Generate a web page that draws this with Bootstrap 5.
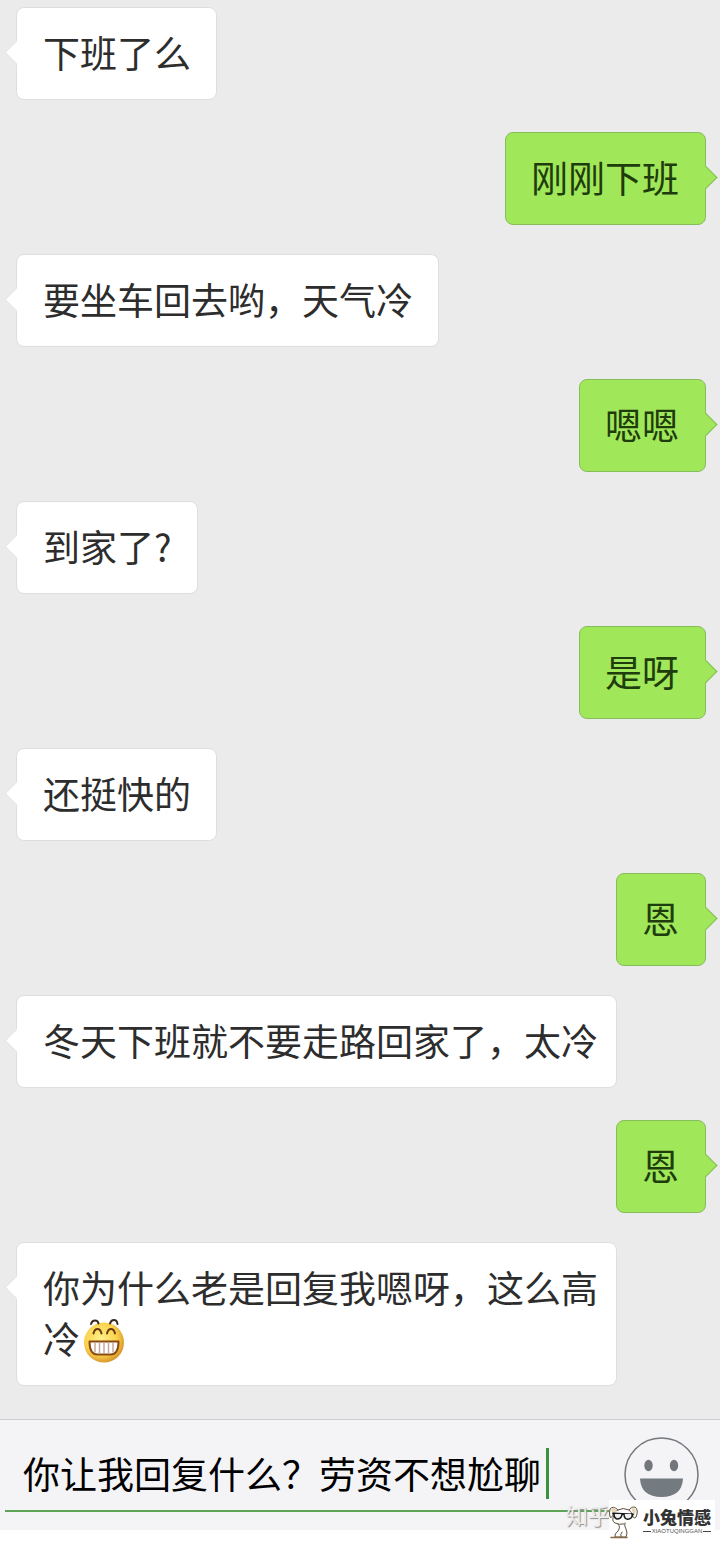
<!DOCTYPE html>
<html lang="zh-CN">
<head>
<meta charset="utf-8">
<meta name="viewport" content="width=device-width, initial-scale=1">
<title>聊天</title>
<link rel="stylesheet" href="https://cdn.jsdelivr.net/npm/bootstrap@5.3.0/dist/css/bootstrap.min.css">
<style>
  body { background: #fff; font-family: "Noto Sans CJK SC", sans-serif; }
  .chat { background: #ebebeb; padding: 7px 14px 33px 16px; }
  .pair { gap: 32px; margin-bottom: 29px; }
  .bubble {
    position: relative; border: 1px solid #dedede; border-radius: 8px;
    background: #fff; color: #2d2d2d; font-size: 37px; line-height: 51px;
    padding: 19px 25px 21px 26px;
  }
  .bubble::before {
    content: ""; position: absolute; top: 36px; left: -9px; width: 17px; height: 17px;
    background: inherit; border: solid #e2e2e2; border-width: 0 0 1px 1px; transform: rotate(45deg);
  }
  .bubble-wide { padding-right: 18px; max-width: 601px; }
  .mine { background: #a0e75a; border-color: #86bd5c; color: #1f3d0c; padding: 19px 26px 21px 25px; }
  .mine::before { left: auto; right: -9px; border-color: #86bd5c; border-width: 1px 1px 0 0; }
  .grin { width: 42px; height: 44px; margin: -6px 0 0 3px; vertical-align: middle; }
  .composer { background: #f4f4f6; border-top: 1px solid #cfcfd1; height: 111px; padding: 17px 21px 0 5px; }
  .field { border-bottom: 2px solid #5fa356; padding: 0 0 11px 18px; height: 75px; margin-right: 14px; }
  .field input {
    width: 14em; height: 52px; font-size: 37px; line-height: 52px; color: #000;
    border: 0; padding: 0; background: none; outline: 0;
  }
  .caret { width: 3px; height: 51px; background: #38913b; margin-left: 5px; }
  .face { width: 75px; height: 75px; border: 0; padding: 0; background: none; }
  .page-end { height: 15px; }
  .source { right: 5px; bottom: -10px; }
  .zhihu { font-size: 22px; line-height: 24px; color: #ededee; text-shadow: 1px 1px 1px #8c8c8c; margin: 2px -1px 0 0; }
  .brand-box { background: #fff; width: 106px; height: 40px; }
  .brand-name { font-size: 17px; line-height: 20px; font-weight: 900; color: #333; margin-top: 7px; }
  .brand-sub { font-family: "Liberation Sans", sans-serif; font-size: 6px; line-height: 8px; color: #555; gap: 1px; }
  .brand-sub::before, .brand-sub::after { content: ""; flex: 1; height: 1px; background: #444; }
</style>
</head>
<body>
<main>
  <section class="chat" aria-label="聊天记录">
    <div class="pair d-flex flex-column">
      <div class="bubble align-self-start">下班了么</div>
      <div class="bubble mine align-self-end">刚刚下班</div>
    </div>
    <div class="pair d-flex flex-column">
      <div class="bubble align-self-start">要坐车回去哟，天气冷</div>
      <div class="bubble mine align-self-end">嗯嗯</div>
    </div>
    <div class="pair d-flex flex-column">
      <div class="bubble align-self-start">到家了?</div>
      <div class="bubble mine align-self-end">是呀</div>
    </div>
    <div class="pair d-flex flex-column">
      <div class="bubble align-self-start">还挺快的</div>
      <div class="bubble mine align-self-end">恩</div>
    </div>
    <div class="pair d-flex flex-column">
      <div class="bubble bubble-wide align-self-start">冬天下班就不要走路回家了，太冷</div>
      <div class="bubble mine align-self-end">恩</div>
    </div>
    <div class="d-flex">
      <div class="bubble bubble-wide">你为什么老是回复我嗯呀，这么高冷<svg class="grin" viewBox="0 0 42 44" role="img" aria-label="呲牙">
        <defs><radialGradient id="skin" cx=".42" cy=".4" r=".62"><stop offset="0" stop-color="#fff08a"/><stop offset=".65" stop-color="#fbd24b"/><stop offset="1" stop-color="#d8952a"/></radialGradient></defs>
        <circle cx="21" cy="23.500" r="20" fill="url(#skin)"/>
        <g fill="none" stroke-linecap="round">
          <path d="M8 5q1-3.500 4-3.500t3.500 3M27 4.500q1-3.500 4-3.500t3.500 4" stroke="#3d2a1c" stroke-width="2"/>
          <path d="M10.500 14.500q1-4.500 4-4.500t4 4.500M24 14.500q1-4.500 4-4.500t4 4.500" stroke="#6b3b10" stroke-width="2"/>
        </g>
        <path d="M6.500 22.500h29q0 13-8 13h-13q-8 0-8-13z" fill="#fff" stroke="#8a4b12" stroke-width="2" stroke-linejoin="round"/>
        <path d="M12 23.500v10M16.500 23.500v11M21 23.500v11M25.500 23.500v11M30 23.500v10" stroke="#c8a89a" stroke-width="1.500"/>
      </svg></div>
    </div>
  </section>

  <form class="composer position-relative d-flex align-items-start">
    <div class="field flex-grow-1 d-flex align-items-end">
      <input type="text" aria-label="输入消息" value="你让我回复什么？劳资不想尬聊">
      <span class="caret"></span>
    </div>
    <button class="face" type="button" aria-label="表情">
      <svg class="d-block" width="75" height="75" viewBox="0 0 75 75">
        <circle cx="37.500" cy="37.500" r="36.500" fill="none" stroke="#73777b" stroke-width="1.500"/>
        <ellipse cx="24.500" cy="28.500" rx="4.200" ry="5.700" fill="#73777b"/>
        <ellipse cx="50" cy="28.500" rx="4.200" ry="5.700" fill="#73777b"/>
        <path d="M16 41.500h43q-1 18.500-21.500 18.500T16 41.500z" fill="#737a80"/>
      </svg>
    </button>
    <div class="source position-absolute d-flex align-items-start">
      <span class="zhihu">知乎</span>
      <div class="brand-box d-flex">
        <svg width="30" height="40" viewBox="0 0 30 40" fill="none" stroke="#5d5142" stroke-width="1" stroke-linecap="round" stroke-linejoin="round" aria-hidden="true">
          <path d="M9 10Q4 5 1 9q-1 4 0 8 1 2 3-2Q6 10 9 10q5-3 11 0 2-4 6-3 4 3 1 10-1 2-3 0-1-5-4-7M5 15q-3 6 1 8 4 2 9 1" fill="#fffdf8"/>
          <path d="M2 9q3-3 6 1L4 16zM22 8q4-1 5 3l-2 5z" fill="#e7d6bc" stroke="none"/>
          <path d="M9 24q3 3 0 7-4 3-3 6h11q2-4 0-8-2-3-1-6M12 37q-1-3 1-5"/>
          <path d="M4 13.500l20 1" stroke="#16181b" stroke-width="1.800"/>
          <path d="M5 14q0 5 4 5 4-1 4-5M15 14q0 6 5 5 4-1 3-5" stroke="#16181b" stroke-width="1.500" fill="#eee"/>
          <path d="M2 37.500h16" stroke="#8a6a45" stroke-width="1.500"/>
        </svg>
        <div class="d-flex flex-column ms-1">
          <span class="brand-name">小兔情感</span>
          <span class="brand-sub d-flex align-items-center">XIAOTUQINGGAN</span>
        </div>
      </div>
    </div>
  </form>
  <div class="page-end"></div>
</main>
<script src="https://cdn.jsdelivr.net/npm/bootstrap@5.3.0/dist/js/bootstrap.bundle.min.js"></script>
</body>
</html>
